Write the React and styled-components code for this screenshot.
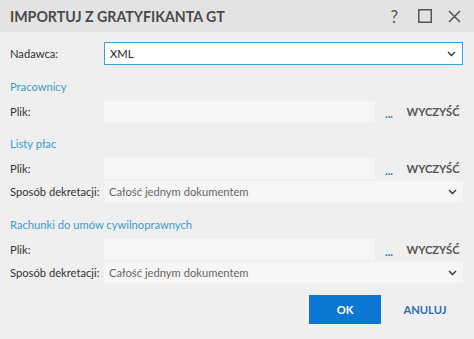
import React from 'react'
import styled, { createGlobalStyle } from 'styled-components'

const GlobalStyle = createGlobalStyle`
    html, body {
        margin: 0;
        padding: 0;
        background: #efefef;
    }
    * { box-sizing: border-box; }
`;

const Dialog = styled.div`
    width: 474px;
    height: 339px;
    background: #efefef;
    font-family: Lato, "Noto Sans", sans-serif;
    font-size: 11.2px;
    color: #333;
    display: flex;
    flex-direction: column;
    white-space: nowrap;
`;

const TitleBar = styled.div`
    height: 32px;
    background: #e3e3e3;
    display: flex;
    align-items: center;
    padding: 0 13px 0 10px;
`;

const Title = styled.div`
    flex: 1;
    font-weight: 700;
    font-size: 14.2px;
    color: #4a4a4a;
`;

const TitleIcons = styled.div`
    display: flex;
    align-items: center;
    color: #555;
`;

const HelpIcon = styled.span`
    font-size: 17px;
    margin-right: 20px;
`;

const MaxIcon = styled.svg`
    margin-right: 16px;
`;

const Body = styled.div`
    padding: 10px 11px 0 10px;
    display: flex;
    flex-direction: column;
`;

const Row = styled.div`
    display: flex;
    align-items: center;
    height: ${({ h }) => h || 21}px;
    margin-top: ${({ mt }) => mt || 0}px;
`;

const Label = styled.div`
    width: 94px;
    flex-shrink: 0;
    color: #333;
`;

const Select = styled.div`
    flex: 1;
    height: 100%;
    display: flex;
    align-items: center;
    justify-content: space-between;
    padding: 0 6px 0 5px;
    background: ${({ active }) => (active ? '#fff' : '#f6f6f6')};
    border: ${({ active }) => (active ? '1px solid #3aa0d6' : 'none')};
    color: ${({ active }) => (active ? '#222' : '#666')};
`;

const FileInput = styled.div`
    width: 271px;
    height: 100%;
    background: #f6f6f6;
`;

const Dots = styled.div`
    width: 28px;
    text-align: center;
    color: #2a6fb0;
    font-weight: 700;
    line-height: 1;
    padding-top: 4px;
`;

const ClearBtn = styled.div`
    flex: 1;
    text-align: center;
    font-weight: 700;
    color: #555;
`;

const Heading = styled.div`
    color: #3e9cc4;
    height: 16px;
    line-height: 16px;
    margin-top: ${({ mt }) => mt}px;
    margin-bottom: 6px;
`;

const Footer = styled.div`
    display: flex;
    justify-content: flex-end;
    align-items: center;
    margin-top: 12px;
`;

const OkButton = styled.div`
    width: 72px;
    height: 29px;
    background: #0a78d2;
    color: #fff;
    font-weight: 700;
    display: flex;
    align-items: center;
    justify-content: center;
`;

const CancelButton = styled.div`
    width: 82px;
    padding-left: 6px;
    text-align: center;
    color: #2a6fb0;
    font-weight: 700;
`;

const Chevron = () => (
    <svg width="9" height="6" viewBox="0 0 9 6">
        <path d="M1 1 L4.5 4.5 L8 1" fill="none" stroke="#333" strokeWidth="1.4" />
    </svg>
);

const FileRow = ({ mt }) => (
    <Row mt={mt}>
        <Label>Plik:</Label>
        <FileInput />
        <Dots>...</Dots>
        <ClearBtn>WYCZYŚĆ</ClearBtn>
    </Row>
);

const ModeRow = () => (
    <Row mt={2}>
        <Label>Sposób dekretacji:</Label>
        <Select>
            <span>Całość jednym dokumentem</span>
            <Chevron />
        </Select>
    </Row>
);

export default function App() {
    return (
        <>
            <GlobalStyle />
            <Dialog>
                <TitleBar>
                    <Title>IMPORTUJ Z GRATYFIKANTA GT</Title>
                    <TitleIcons>
                        <HelpIcon>?</HelpIcon>
                        <MaxIcon width="14" height="14" viewBox="0 0 14 14">
                            <rect x="0.75" y="0.75" width="12.5" height="12.5" fill="none" stroke="#555" strokeWidth="1.5" />
                        </MaxIcon>
                        <svg width="13" height="13" viewBox="0 0 13 13">
                            <path d="M1 1 L12 12 M12 1 L1 12" stroke="#555" strokeWidth="1.6" />
                        </svg>
                    </TitleIcons>
                </TitleBar>
                <Body>
                    <Row h={23}>
                        <Label>Nadawca:</Label>
                        <Select active>
                            <span>XML</span>
                            <Chevron />
                        </Select>
                    </Row>
                    <Heading mt={14}>Pracownicy</Heading>
                    <FileRow />
                    <Heading mt={14}>Listy płac</Heading>
                    <FileRow />
                    <ModeRow />
                    <Heading mt={15}>Rachunki do umów cywilnoprawnych</Heading>
                    <FileRow />
                    <ModeRow />
                    <Footer>
                        <OkButton>OK</OkButton>
                        <CancelButton>ANULUJ</CancelButton>
                    </Footer>
                </Body>
            </Dialog>
        </>
    )
}
